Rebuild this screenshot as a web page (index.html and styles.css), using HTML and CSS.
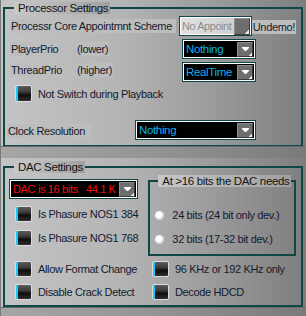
FILE: index.html
```html
<!DOCTYPE html>
<html lang="en">
<head>
    <meta charset="UTF-8">
    <title>Settings</title>
    <link rel="stylesheet" href="styles.css">
</head>
<body>

<div class="window">

    <!-- Processor settings -->
    <div class="panel panel-cpu">
        <fieldset class="group">
            <legend>Processor Settings</legend>

            <div class="row row-scheme">
                <span class="tag tag-scheme">Processr Core Appointmnt Scheme</span>
                <div class="combo combo-edit">
                    <span class="combo-text">No Appoint</span>
                    <span class="combo-btn"></span>
                </div>
                <span class="tag tag-undemo">Undemo!</span>
            </div>

            <div class="row row-prio">
                <span class="tag">PlayerPrio</span>
                <span class="tag">(lower)</span>
                <div class="combo">
                    <span class="combo-text">Nothing</span>
                    <span class="combo-btn"><svg width="7" height="5" viewBox="0 0 7 5"><polygon points="0,0 7,0 7,1 4,4 3,4 0,1" fill="#fff"/></svg></span>
                </div>
            </div>

            <div class="row row-prio row-thread">
                <span class="tag">ThreadPrio</span>
                <span class="tag">(higher)</span>
                <div class="combo">
                    <span class="combo-text">RealTime</span>
                    <span class="combo-btn"><svg width="7" height="5" viewBox="0 0 7 5"><polygon points="0,0 7,0 7,1 4,4 3,4 0,1" fill="#fff"/></svg></span>
                </div>
            </div>

            <label class="check check-playback"><span class="box"></span>Not Switch during Playback</label>

            <div class="row row-clock">
                <span class="tag tag-clock">Clock Resolution</span>
                <div class="combo combo-clock">
                    <span class="combo-text">Nothing</span>
                    <span class="combo-btn"><svg width="7" height="5" viewBox="0 0 7 5"><polygon points="0,0 7,0 7,1 4,4 3,4 0,1" fill="#fff"/></svg></span>
                </div>
            </div>
        </fieldset>
    </div>

    <div class="band"></div>

    <!-- DAC settings -->
    <div class="panel panel-dac">
        <fieldset class="group">
            <legend>DAC Settings</legend>

            <div class="dac-top">
                <div class="dac-left">
                    <div class="combo combo-dac">
                        <span class="combo-text">DAC is 16 bits   44.1 K</span>
                        <span class="combo-btn"><svg width="7" height="5" viewBox="0 0 7 5"><polygon points="0,0 7,0 7,1 4,4 3,4 0,1" fill="#fff"/></svg></span>
                    </div>
                    <label class="check check-nos384"><span class="box"></span>Is Phasure NOS1 384</label>
                    <label class="check check-nos768"><span class="box"></span>Is Phasure NOS1 768</label>
                </div>

                <fieldset class="group group-bits">
                    <legend>At &gt;16 bits the DAC needs</legend>
                    <label class="radio radio-24"><span class="dot"></span>24 bits (24 bit only dev.)</label>
                    <label class="radio radio-32"><span class="dot"></span>32 bits (17-32 bit dev.)</label>
                </fieldset>
            </div>

            <div class="dac-checks">
                <label class="check"><span class="box"></span>Allow Format Change</label>
                <label class="check"><span class="box"></span>96 KHz or 192 KHz only</label>
                <label class="check"><span class="box"></span>Disable Crack Detect</label>
                <label class="check"><span class="box"></span>Decode HDCD</label>
            </div>
        </fieldset>
    </div>

    <div class="band band-bottom"></div>

</div>

</body>
</html>
```

FILE: styles.css
```css
* {
    box-sizing: border-box;
}
body {
    margin: 0;
    font-family: "Liberation Sans", Arial, sans-serif;
    font-size: 11px;
    letter-spacing: -0.35px;
    color: #141a2e;
}
.window {
    width: 306px;
    height: 316px;
    overflow: hidden;
    background: #8a8a8a;
    border-left: 1px solid #7a7a7a;
}
.panel {
    background: linear-gradient(to right, #c4c4c4, #b4b4b4 40%, #9a9a9a 70%, #7e7e7e);
}
.panel-cpu {
    height: 146px;
    padding-top: 2px;
}
.panel-dac {
    height: 149px;
    padding-top: 3px;
}
.band {
    height: 12px;
    border-top: 1px solid #6a6a6a;
    background: linear-gradient(to right, #a6a6a6, #949494 50%, #7a7a7a);
}
.band-bottom {
    height: 9px;
}

/* group frames */
.group {
    margin: 0 0 0 2px;
    width: 300px;
    min-width: 0;
    padding: 0 5px 5px 5px;
    border: 2px solid #0f4747;
}
.group legend {
    margin-left: 4px;
    padding: 0 2px 0 4px;
    height: 12px;
    line-height: 12px;
    font-size: 11.5px;
    color: #141414;
    white-space: nowrap;
    background: linear-gradient(to right, #c8c8c8, #a0a0a0);
}

/* label boxes */
.tag {
    height: 14px;
    line-height: 14px;
    padding: 0 1px;
    background: #bdbdbd;
    white-space: nowrap;
}

.row {
    display: flex;
    align-items: center;
    height: 20px;
    margin-top: 3px;
}
.row-scheme {
    margin-top: 2px;
}
.tag-scheme {
    width: 169px;
    margin-right: 3px;
}
.tag-undemo {
    width: 45px;
    margin-top: 1px;
}
.row-prio {
    display: grid;
    grid-template-columns: 66px 106px 74px;
}
.row-prio .tag {
    justify-self: start;
}
.row-thread .tag {
    margin-top: -5px;
}
.row-clock {
    margin-top: 18px;
}
.tag-clock {
    width: 84px;
    margin-left: -3px;
    margin-right: 44px;
    margin-top: 2px;
}

/* combo boxes */
.combo {
    display: flex;
    align-items: center;
    width: 74px;
    height: 20px;
    padding: 1px 2px 1px 2px;
    border: 1px solid #0f4747;
    background: #000;
    box-shadow: inset 0 0 0 1px #fff;
}
.combo-text {
    flex: 1;
    min-width: 0;
    padding-left: 1px;
    font-size: 11.5px;
    color: #0cb2ea;
    white-space: pre;
    overflow: hidden;
}
.combo-btn {
    display: flex;
    align-items: center;
    justify-content: center;
    flex: none;
    width: 16px;
    height: 15px;
    border: 1px solid;
    border-color: #8c8c8c #3c3c3c #3c3c3c #8c8c8c;
    background: linear-gradient(135deg, #6e6e6e 86%, #e8e8e8 86%);
}
.combo-edit {
    padding-right: 1px;
    background: linear-gradient(to right, #e2e2e2, #cacaca);
}
.combo-edit .combo-text {
    padding-left: 0;
    font-size: 11px;
    letter-spacing: -0.45px;
    color: #8c8c8c;
}
.combo-edit .combo-btn {
    height: 17px;
}
.combo-clock {
    width: 121px;
}
.combo-dac {
    width: 129px;
    margin-left: -1px;
}
.combo-dac .combo-text {
    font-size: 11px;
    color: #f01010;
}

/* check boxes */
.check {
    display: flex;
    align-items: center;
    gap: 6px;
    height: 16px;
    margin-left: 5px;
    white-space: nowrap;
}
.box {
    flex: none;
    width: 17px;
    height: 16px;
    border: 1px solid #dcdcdc;
    border-radius: 2px;
    background: linear-gradient(#5c5c5c, #3a3a3a 40%, #0e0e0e 60%, #2e2e2e);
    box-shadow: inset 2px 0 0 #1ec6ff;
}
.check-playback {
    height: 17px;
    margin-top: 3px;
}
.check-playback .box {
    height: 17px;
}

/* DAC frame */
.dac-top {
    display: flex;
    align-items: flex-start;
}
.dac-left {
    margin-top: 6px;
}
.check-nos384 {
    margin-top: 7px;
}
.check-nos768 {
    margin-top: 8px;
}
.group-bits {
    width: 152px;
    margin: 2px 0 0 10px;
    padding: 0 5px 8px 5px;
}
.group-bits legend {
    margin-left: 3px;
}
.radio {
    display: flex;
    align-items: center;
    gap: 8px;
    height: 14px;
    white-space: nowrap;
}
.radio-24 {
    margin-top: 21px;
}
.radio-32 {
    margin-top: 10px;
}
.dot {
    flex: none;
    width: 9px;
    height: 9px;
    border-radius: 50%;
    background: radial-gradient(circle at 40% 40%, #fff 35%, #d0d0d0 70%, #909090);
}
.dac-checks {
    display: grid;
    grid-template-columns: 142px 1fr;
    row-gap: 7px;
    margin-top: 5px;
}
.dac-checks .check:nth-child(even) {
    margin-left: 0;
}
```
